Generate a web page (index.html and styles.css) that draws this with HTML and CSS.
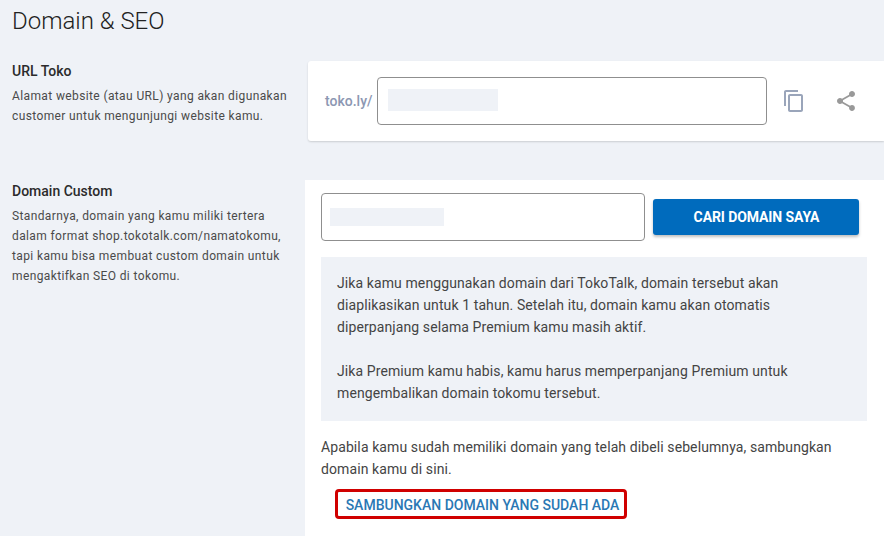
FILE: index.html
```html
<!DOCTYPE html>
<html lang="en">
  <head>
    <meta charset="UTF-8" />
    <meta name="viewport" content="width=device-width, initial-scale=1.0" />
    <title>Domain &amp; SEO</title>
    <link rel="stylesheet" href="styles.css">
  </head>
  <body>
    <h1 class="page-title">Domain &amp; SEO</h1>

    <section class="row row-url">
      <div class="row-info">
        <h2 class="row-title">URL Toko</h2>
        <p class="row-desc">Alamat website (atau URL) yang akan digunakan customer untuk mengunjungi website kamu.</p>
      </div>
      <div class="card card-url">
        <span class="prefix">toko.ly/</span>
        <div class="field field-url"><span class="blank blank-url"></span></div>
        <svg class="icon icon-copy" width="24" height="24" viewBox="0 0 24 24" fill="#9aa5ba">
          <path d="M16 1H4C2.9 1 2 1.9 2 3v14h2V3h12V1zm3 4H8C6.9 5 6 5.9 6 7v14c0 1.1.9 2 2 2h11c1.100 0 2-.9 2-2V7c0-1.100-.9-2-2-2zm0 16H8V7h11v14z" />
        </svg>
        <svg class="icon icon-share" width="24" height="24" viewBox="0 0 24 24" fill="#999">
          <path d="M18 16.080c-.76 0-1.440.3-1.960.77L8.910 12.700c.05-.23.090-.46.090-.7s-.04-.47-.09-.7l7.050-4.110c.54.5 1.250.81 2.040.81 1.660 0 3-1.340 3-3s-1.340-3-3-3-3 1.340-3 3c0 .24.040.47.090.7L8.040 9.810C7.500 9.310 6.790 9 6 9c-1.660 0-3 1.340-3 3s1.340 3 3 3c.79 0 1.500-.31 2.040-.81l7.120 4.160c-.05.21-.08.43-.08.650 0 1.610 1.310 2.920 2.920 2.920s2.920-1.310 2.920-2.920-1.310-2.920-2.920-2.920z" />
        </svg>
      </div>
    </section>

    <section class="row row-domain">
      <div class="row-info">
        <h2 class="row-title">Domain Custom</h2>
        <p class="row-desc">Standarnya, domain yang kamu miliki tertera dalam format shop.tokotalk.com/namatokomu, tapi kamu bisa membuat custom domain untuk mengaktifkan SEO di tokomu.</p>
      </div>
      <div class="card-domain">
        <div class="search">
          <div class="field field-domain"><span class="blank blank-domain"></span></div>
          <button class="search-button">CARI DOMAIN SAYA</button>
        </div>
        <div class="notice">
          <p>Jika kamu menggunakan domain dari TokoTalk, domain tersebut akan diaplikasikan untuk 1 tahun. Setelah itu, domain kamu akan otomatis diperpanjang selama Premium kamu masih aktif.</p>
          <p>Jika Premium kamu habis, kamu harus memperpanjang Premium untuk mengembalikan domain tokomu tersebut.</p>
        </div>
        <p class="connect-text">Apabila kamu sudah memiliki domain yang telah dibeli sebelumnya, sambungkan domain kamu di sini.</p>
        <a class="connect-link" href="#">SAMBUNGKAN DOMAIN YANG SUDAH ADA</a>
      </div>
    </section>
  </body>
</html>
```

FILE: styles.css
```css
html {
  height: 100%;
}

body {
  height: 536px;
  margin: 0;
  overflow: hidden;
  font-family: Roboto, Arial, sans-serif;
  background-color: #eff2f7;
  color: #333;
}

.page-title {
  margin: 0;
  padding: 7px 0 0 12px;
  font-size: 24px;
  line-height: 28px;
  font-weight: 300;
  color: #222;
}

.row {
  display: flex;
  align-items: flex-start;
}

.row-url {
  margin-top: 26px;
}

.row-domain {
  margin-top: 39px;
}

.row-info {
  box-sizing: border-box;
  flex: none;
  padding-left: 12px;
}

.row-url .row-info {
  width: 308px;
}

.row-domain .row-info {
  width: 305px;
  padding-top: 1px;
}

.row-title {
  margin: 0;
  padding-top: 2px;
  font-size: 14px;
  line-height: 17px;
  font-weight: 500;
  color: #2b2b2b;
}

.row-desc {
  margin: 6px 0 0;
  width: 282px;
  font-size: 12px;
  line-height: 20px;
  letter-spacing: 0.38px;
  color: #4a4a4a;
}

.card {
  display: flex;
  align-items: center;
  box-sizing: border-box;
  flex: 1;
  height: 80px;
  padding-left: 17px;
  background-color: white;
  border-radius: 3px 0 0 3px;
  box-shadow: 0px 1px 2px rgba(0, 0, 0, 0.15);
}

.prefix {
  width: 52px;
  font-size: 14px;
  font-weight: 500;
  color: #8c97b2;
}

.field {
  display: flex;
  align-items: center;
  box-sizing: border-box;
  height: 48px;
  background-color: white;
  border: 1px solid #8f8f8f;
  border-radius: 4px;
}

.field-url {
  width: 390px;
  padding-left: 10px;
}

.field-domain {
  width: 324px;
  padding-left: 8px;
}

.blank {
  display: block;
  background-color: #eff2f7;
}

.blank-url {
  width: 110px;
  height: 22px;
  margin-top: -2px;
}

.blank-domain {
  width: 114px;
  height: 18px;
}

.icon {
  flex: none;
}

.icon-copy {
  margin-left: 15px;
}

.icon-share {
  margin-left: 28px;
}

.card-domain {
  box-sizing: border-box;
  flex: 1;
  height: 356px;
  padding: 13px 17px 0 16px;
  background-color: white;
}

.search {
  display: flex;
  align-items: center;
  gap: 8px;
}

.search-button {
  width: 206px;
  height: 36px;
  padding: 0 0 0 1px;
  border: none;
  border-radius: 3px;
  background-color: #006bbd;
  color: white;
  font-family: inherit;
  font-size: 14px;
  font-weight: 700;
  letter-spacing: -0.1px;
  box-shadow: 0px 2px 3px rgba(0, 0, 0, 0.25);
}

.notice {
  margin-top: 16px;
  height: 164px;
  box-sizing: border-box;
  padding: 15px 16px;
  background-color: #eff2f7;
  font-size: 14px;
  line-height: 22px;
  letter-spacing: 0.1px;
  color: #444;
}

.notice p {
  margin: 0 0 22px;
}

.connect-text {
  margin: 15px 0 0;
  font-size: 14px;
  line-height: 22px;
  letter-spacing: 0.1px;
  color: #444;
}

.connect-link {
  display: block;
  box-sizing: border-box;
  width: 292px;
  height: 30px;
  margin: 9px 0 0 14px;
  padding-left: 3px;
  border: 3px solid #d00000;
  border-radius: 4px;
  font-size: 14px;
  font-weight: 500;
  line-height: 26px;
  text-align: center;
  text-decoration: none;
  color: #2a78b4;
}
```
